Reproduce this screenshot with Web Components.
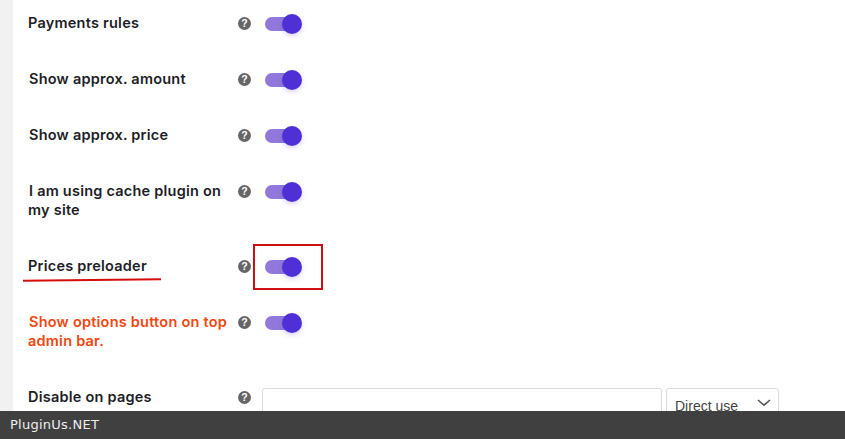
<!DOCTYPE html>
<html><head><meta charset="utf-8"><title>Options</title>
<style>
html,body{margin:0;padding:0;height:100%;overflow:hidden;background:#fff}
</style></head><body>
<template id="t-page"><style>
:host{display:block;position:relative;width:845px;height:439px;overflow:hidden;background:#fff;font-family:Inter,"Liberation Sans",sans-serif}
.wrap{display:flex;height:100%}
.strip{width:13px;background:#f1f1f1;flex:none}
.rows{flex:1;display:flex;flex-direction:column;gap:37px;padding:13px 0 0 15px}
</style><div class="wrap"><div class="strip"></div><div class="rows"><slot></slot></div></div><slot name="over"></slot></template>

<template id="t-row"><style>
:host{display:flex;align-items:flex-start;flex:none}
.label{width:210px;flex:none;font:600 14.5px/19px Inter,"Liberation Sans",sans-serif;color:#1e1e28;letter-spacing:.23px;box-sizing:border-box}
:host([ind]) .label{text-indent:1px}
:host([warn]) .label{color:#f2460f}
.mid{display:flex;align-items:flex-start;gap:14px}
</style><div class="label"><slot name="label"></slot></div><div class="mid"><opt-help></opt-help><slot></slot></div></template>

<template id="t-help"><style>
:host{display:flex;flex:none;width:13px;height:13px;border-radius:50%;background:#666;color:#fff;align-items:center;justify-content:center;font:700 10.5px/13px "Liberation Sans",sans-serif;margin:4px 0 0 0}
</style>?</template>

<template id="t-toggle"><style>
:host{display:block;position:relative;width:37px;height:20px;flex:none;margin:1px 0 -2px}
.track{position:absolute;left:0;top:3px;width:35px;height:14px;border-radius:7px;background:#9278db}
.knob{position:absolute;right:0;top:0;width:20px;height:20px;border-radius:50%;background:#4f2fd6;box-shadow:0 2px 5px rgba(80,50,215,.22)}
</style><div class="track"></div><div class="knob"></div></template>

<template id="t-field"><style>
:host{display:flex;gap:4px;margin-left:-3px;margin-top:1px}
.input{width:400px;height:40px;box-sizing:border-box;border:1px solid #ddd;border-radius:3px;background:#fff}
.sel{width:113px;height:40px;box-sizing:border-box;border:1px solid #ddd;border-radius:3px;background:#fff;display:flex;justify-content:space-between;padding:9px 7px 0 8px;font:14px/16px "Liberation Sans",sans-serif;color:#444}
svg{margin-top:-1px}
</style><div class="input"></div><div class="sel"><span>Direct use</span><svg width="14" height="10" viewBox="0 0 14 10"><path d="M1 3 7 8.200 13 3" fill="none" stroke="#555" stroke-width="1.600"/></svg></div></template>

<template id="t-footer"><style>
:host{display:flex;align-items:center;position:absolute;left:0;right:0;bottom:0;height:28px;background:#404040;color:#eee;font:13px/28px "DejaVu Sans",sans-serif;letter-spacing:.25px;padding-left:10px}
</style><slot></slot></template>

<template id="t-marks"><style>
:host{display:block;position:absolute;inset:0;pointer-events:none}
.box{position:absolute;left:253px;top:244px;width:70px;height:46px;box-sizing:border-box;border:2px solid #cc0f0f}
svg{position:absolute;left:0;top:0}
</style><div class="box"></div><svg width="845" height="439"><path d="M23 280.800 161 279.200" fill="none" stroke="#d40d0d" stroke-width="2"/></svg></template>

<opt-page>
 <opt-row><span slot="label">Payments rules</span><opt-toggle></opt-toggle></opt-row>
 <opt-row ind><span slot="label">Show approx. amount</span><opt-toggle></opt-toggle></opt-row>
 <opt-row ind><span slot="label">Show approx. price</span><opt-toggle></opt-toggle></opt-row>
 <opt-row ind><span slot="label">I am using cache plugin on my site</span><opt-toggle></opt-toggle></opt-row>
 <opt-row><span slot="label">Prices preloader</span><opt-toggle></opt-toggle></opt-row>
 <opt-row warn ind><span slot="label">Show options button on top admin bar.</span><opt-toggle></opt-toggle></opt-row>
 <opt-row><span slot="label">Disable on pages</span><opt-field></opt-field></opt-row>
 <opt-marks slot="over"></opt-marks>
 <opt-footer slot="over">PluginUs.NET</opt-footer>
</opt-page>
<script>
for(const [tag,id] of [['opt-page','t-page'],['opt-row','t-row'],['opt-help','t-help'],['opt-toggle','t-toggle'],['opt-field','t-field'],['opt-footer','t-footer'],['opt-marks','t-marks']]){
 customElements.define(tag,class extends HTMLElement{constructor(){super();this.attachShadow({mode:'open'}).appendChild(document.getElementById(id).content.cloneNode(true));}});
}
</script>
</body></html>
